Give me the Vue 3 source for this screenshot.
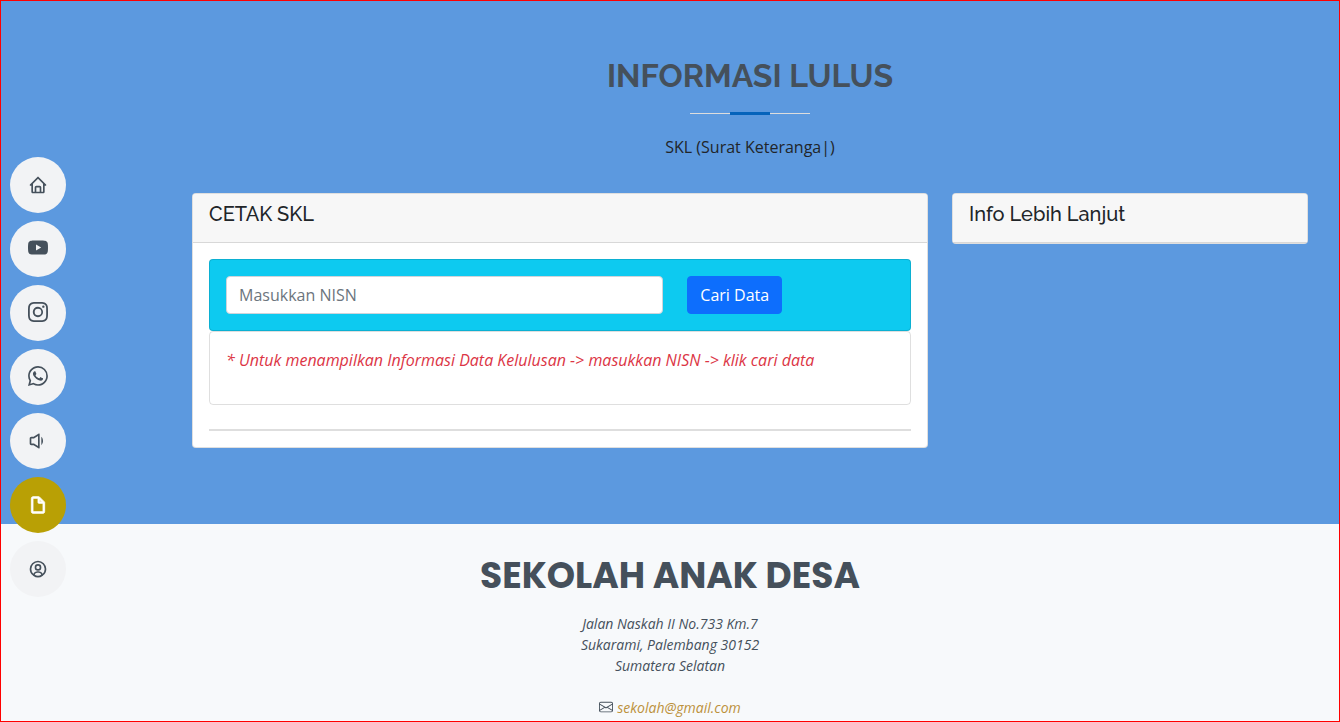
<script setup>
import { ref } from 'vue'

const nisn = ref('')

const links = [
  {
    label: 'Beranda',
    box: '0 0 24 24',
    path: 'M3 13h1v7c0 1.103.897 2 2 2h12c1.103 0 2-.897 2-2v-7h1a1 1 0 0 0 .707-1.707l-9-9a.999.999 0 0 0-1.414 0l-9 9A1 1 0 0 0 3 13zm7 7v-5h4v5h-4zm2-15.586 6 6V15l.001 5H16v-5c0-1.103-.897-2-2-2h-4c-1.103 0-2 .897-2 2v5H6v-9.586l6-6z',
  },
  {
    label: 'YouTube',
    box: '0 0 16 16',
    social: true,
    path: 'M8.051 1.999h.089c.822.003 4.987.033 6.11.335a2.01 2.01 0 0 1 1.415 1.42c.101.38.172.883.22 1.402l.01.104.022.26.008.104c.065.914.073 1.77.074 1.957v.075c-.001.194-.01 1.108-.082 2.06l-.008.105-.009.104c-.05.572-.124 1.14-.235 1.558a2.007 2.007 0 0 1-1.415 1.42c-1.16.312-5.569.334-6.18.335h-.142c-.309 0-1.587-.006-2.927-.052l-.17-.006-.087-.004-.171-.007-.171-.007c-1.11-.049-2.167-.128-2.654-.26a2.007 2.007 0 0 1-1.415-1.419c-.111-.417-.185-.986-.235-1.558L.09 9.82l-.008-.104A31.4 31.4 0 0 1 0 7.68v-.123c.002-.215.01-.958.064-1.778l.007-.103.003-.052.008-.104.022-.26.01-.104c.048-.519.119-1.023.22-1.402a2.007 2.007 0 0 1 1.415-1.42c.487-.13 1.544-.21 2.654-.26l.17-.007.172-.006.086-.003.171-.007A99.788 99.788 0 0 1 7.858 2h.193zM6.4 5.209v4.818l4.157-2.408L6.4 5.209z',
  },
  {
    label: 'Instagram',
    box: '0 0 16 16',
    social: true,
    path: 'M8 0C5.829 0 5.556.01 4.703.048 3.85.088 3.269.222 2.76.42a3.917 3.917 0 0 0-1.417.923A3.927 3.927 0 0 0 .42 2.76C.222 3.268.087 3.85.048 4.7.01 5.555 0 5.827 0 8.001c0 2.172.01 2.444.048 3.297.04.852.174 1.433.372 1.942.205.526.478.972.923 1.417.444.445.89.719 1.416.923.51.198 1.09.333 1.942.372C5.555 15.99 5.827 16 8 16s2.444-.01 3.298-.048c.851-.04 1.434-.174 1.943-.372a3.916 3.916 0 0 0 1.416-.923c.445-.445.718-.891.923-1.417.197-.509.332-1.09.372-1.942C15.99 10.445 16 10.173 16 8s-.01-2.445-.048-3.299c-.04-.851-.175-1.433-.372-1.941a3.926 3.926 0 0 0-.923-1.417A3.911 3.911 0 0 0 13.24.42c-.51-.198-1.092-.333-1.943-.372C10.443.01 10.172 0 7.998 0H8zm-.717 1.442h.718c2.136 0 2.389.007 3.232.046.78.035 1.204.166 1.486.275.373.145.64.319.92.599.28.28.453.546.598.92.11.281.24.705.275 1.485.039.843.047 1.096.047 3.231s-.008 2.389-.047 3.232c-.035.78-.166 1.203-.275 1.485a2.47 2.47 0 0 1-.599.919c-.28.28-.546.453-.92.598-.28.11-.704.24-1.485.276-.843.038-1.096.047-3.232.047s-2.39-.009-3.233-.047c-.78-.036-1.203-.166-1.485-.276a2.478 2.478 0 0 1-.92-.598 2.48 2.48 0 0 1-.6-.92c-.109-.281-.24-.705-.275-1.485-.038-.843-.046-1.096-.046-3.233 0-2.136.008-2.388.046-3.231.036-.78.166-1.204.276-1.486.145-.373.319-.64.599-.92.28-.28.546-.453.92-.598.282-.11.705-.24 1.485-.276.738-.034 1.024-.044 2.515-.045v.002zm4.988 1.328a.96.96 0 1 0 0 1.92.96.96 0 0 0 0-1.92zm-4.27 1.122a4.109 4.109 0 1 0 0 8.217 4.109 4.109 0 0 0 0-8.217zm0 1.441a2.667 2.667 0 1 1 0 5.334 2.667 2.667 0 0 1 0-5.334z',
  },
  {
    label: 'WhatsApp',
    box: '0 0 16 16',
    social: true,
    path: 'M13.601 2.326A7.854 7.854 0 0 0 7.994 0C3.627 0 .068 3.558.064 7.926c0 1.399.366 2.76 1.057 3.965L0 16l4.204-1.102a7.933 7.933 0 0 0 3.79.965h.004c4.368 0 7.926-3.558 7.93-7.93A7.898 7.898 0 0 0 13.6 2.326zM7.994 14.521a6.573 6.573 0 0 1-3.356-.92l-.24-.144-2.494.654.666-2.433-.156-.251a6.56 6.56 0 0 1-1.007-3.505c0-3.626 2.957-6.584 6.591-6.584a6.56 6.56 0 0 1 4.66 1.931 6.557 6.557 0 0 1 1.928 4.66c-.004 3.639-2.961 6.592-6.592 6.592zm3.615-4.934c-.197-.099-1.17-.578-1.353-.646-.182-.065-.315-.099-.445.099-.133.197-.513.646-.627.775-.114.133-.232.148-.43.05-.197-.1-.836-.308-1.592-.985-.59-.525-.985-1.175-1.103-1.372-.114-.198-.011-.304.088-.403.087-.088.197-.232.296-.346.1-.114.133-.198.198-.33.065-.134.034-.248-.015-.347-.05-.099-.445-1.076-.612-1.47-.16-.389-.323-.335-.445-.34-.114-.007-.247-.007-.38-.007a.729.729 0 0 0-.529.247c-.182.198-.691.677-.691 1.654 0 .977.71 1.916.81 2.049.098.133 1.394 2.132 3.383 2.992.47.205.84.326 1.129.418.475.152.904.129 1.246.08.38-.058 1.171-.48 1.338-.943.164-.464.164-.86.114-.943-.049-.084-.182-.133-.38-.232z',
  },
  {
    label: 'Pengumuman',
    box: '0 0 24 24',
    path: 'M4 17h2.697l5.748 3.832a1.004 1.004 0 0 0 1.027.05A1 1 0 0 0 14 20V4a1 1 0 0 0-1.554-.832L6.697 7H4c-1.103 0-2 .897-2 2v6c0 1.103.897 2 2 2zm0-8h3c.033 0 .061-.016.093-.019a1.027 1.027 0 0 0 .38-.116c.026-.015.057-.017.082-.033L12 5.868v12.264l-4.445-2.964c-.025-.017-.056-.02-.082-.033a.986.986 0 0 0-.382-.116C7.059 15.016 7.032 15 7 15H4V9zm12-2v10c1.225-1.1 2-3.229 2-5s-.775-3.9-2-5z',
  },
  {
    label: 'Informasi Lulus',
    box: '0 0 24 24',
    active: true,
    path: 'M19.937 8.68c-.011-.032-.02-.063-.033-.094a.997.997 0 0 0-.196-.293l-6-6a.997.997 0 0 0-.293-.196c-.03-.014-.062-.022-.094-.033a.991.991 0 0 0-.259-.051C13.04 2.011 13.021 2 13 2H6c-1.103 0-2 .897-2 2v16c0 1.103.897 2 2 2h12c1.103 0 2-.897 2-2V9c0-.021-.011-.04-.013-.062a.99.99 0 0 0-.05-.258zM16.586 8H14V5.414L16.586 8zM6 20V4h6v5a1 1 0 0 0 1 1h5l.002 10H6z',
  },
  {
    label: 'Masuk',
    box: '0 0 24 24',
    path: 'M12 2A10.13 10.13 0 0 0 2 12a10 10 0 0 0 4 7.92V20h.1a9.7 9.7 0 0 0 11.8 0h.1v-.08A10 10 0 0 0 22 12 10.13 10.13 0 0 0 12 2zM8.07 18.93A3 3 0 0 1 11 16.57h2a3 3 0 0 1 2.93 2.36 7.75 7.75 0 0 1-7.86 0zm9.54-1.29A5 5 0 0 0 13 14.57h-2a5 5 0 0 0-4.61 3.07A8 8 0 0 1 4 12a8.1 8.1 0 0 1 8-8 8.1 8.1 0 0 1 8 8 8 8 0 0 1-2.39 5.64zM12 6a3.91 3.91 0 0 0-4 4 3.91 3.91 0 0 0 4 4 3.91 3.91 0 0 0 4-4 3.91 3.91 0 0 0-4-4zm0 6a1.91 1.91 0 0 1-2-2 1.91 1.91 0 0 1 2-2 1.91 1.91 0 0 1 2 2 1.91 1.91 0 0 1-2 2z',
  },
]
</script>

<template>
  <div class="page">
    <nav class="side-nav">
      <a
        v-for="link in links"
        :key="link.label"
        href="#"
        class="nav-link"
        :class="{ active: link.active, social: link.social }"
        :aria-label="link.label"
      >
        <svg :viewBox="link.box" aria-hidden="true"><path fill-rule="evenodd" :d="link.path" /></svg>
      </a>
    </nav>

    <main class="main">
      <div class="container">
        <header class="section-title">
          <h2>INFORMASI LULUS</h2>
          <p>SKL (Surat Keteranga|)</p>
        </header>

        <div class="grid">
          <section class="card wide">
            <div class="card-header"><h5>CETAK SKL</h5></div>
            <div class="card-body">
              <form class="search" @submit.prevent>
                <input v-model="nisn" class="wide" type="text" placeholder="Masukkan NISN" aria-label="Masukkan NISN" />
                <div class="narrow"><button type="submit">Cari Data</button></div>
              </form>
              <div class="note">
                <p>* Untuk menampilkan Informasi Data Kelulusan -&gt; masukkan NISN -&gt; klik cari data</p>
              </div>
              <hr />
            </div>
          </section>

          <aside class="card narrow">
            <div class="card-header"><h5>Info Lebih Lanjut</h5></div>
          </aside>
        </div>
      </div>
    </main>

    <footer class="footer">
      <h3>SEKOLAH ANAK DESA</h3>
      <address>
        Jalan Naskah II No.733 Km.7<br />
        Sukarami, Palembang 30152<br />
        Sumatera Selatan<br /><br />
        <svg class="mail" viewBox="0 0 16 16" aria-hidden="true">
          <path d="M0 4a2 2 0 0 1 2-2h12a2 2 0 0 1 2 2v8a2 2 0 0 1-2 2H2a2 2 0 0 1-2-2V4zm2-1a1 1 0 0 0-1 1v.217l7 4.2 7-4.2V4a1 1 0 0 0-1-1H2zm13 2.383-4.758 2.855L15 11.114v-5.73zm-.034 6.878L9.271 8.82 8 9.583 6.728 8.82l-5.694 3.44A1 1 0 0 0 2 13h12a1 1 0 0 0 .966-.739zM1 11.114l4.758-2.876L1 5.383v5.73z" />
        </svg>
        <a href="mailto:sekolah@gmail.com">sekolah@gmail.com</a>
      </address>
    </footer>
    <div class="frame"></div>
  </div>
</template>

<style>
html,
body {
  height: 100%;
  overflow: hidden;
  background: #f7f9fb;
}
</style>

<style scoped>
.page,
.page * {
  box-sizing: border-box;
}
.page {
  font-family: "Open Sans", "Noto Sans", sans-serif;
  font-size: 16px;
  line-height: 24px;
  color: #212529;
}
h2,
h3,
h5,
p {
  margin: 0;
}
.frame {
  position: fixed;
  inset: 0;
  border: 1px solid #f00;
  pointer-events: none;
  z-index: 10;
}
.side-nav {
  position: fixed;
  inset: 0 auto 0 0;
  z-index: 5;
  display: flex;
  flex-direction: column;
  justify-content: center;
  gap: 8px;
  padding: 32px 10px 0;
}
.nav-link {
  display: flex;
  align-items: center;
  justify-content: center;
  width: 56px;
  height: 56px;
  border-radius: 50%;
  background: #f2f3f5;
  color: #45505b;
}
.nav-link svg {
  width: 20px;
  height: 20px;
  fill: currentColor;
}
.nav-link.social {
  padding-bottom: 2px;
}
.nav-link.active {
  background: #b9a005;
  color: #fff;
}
.nav-link.active path {
  stroke: currentColor;
  stroke-width: 1;
}
.main {
  padding: 57px 0 76px 160px;
  background: #5c99df;
}
.container {
  max-width: 1140px;
  margin: 0 auto;
  padding: 0 12px;
}
.section-title {
  padding-bottom: 34px;
  text-align: center;
}
.section-title h2 {
  position: relative;
  margin-bottom: 20px;
  padding-bottom: 20px;
  font-family: Raleway, Lato, sans-serif;
  font-size: 32px;
  font-weight: 700;
  line-height: 38px;
  color: #45505b;
}
.section-title h2::before,
.section-title h2::after {
  content: "";
  position: absolute;
  left: 50%;
  transform: translateX(-50%);
}
.section-title h2::before {
  bottom: 1px;
  width: 120px;
  height: 1px;
  background: #ddd;
}
.section-title h2::after {
  bottom: 0;
  width: 40px;
  height: 3px;
  background: #0563bb;
}
.grid,
.search {
  display: grid;
  grid-template-columns: repeat(12, 1fr);
  column-gap: 24px;
  align-items: start;
}
.wide {
  grid-column: span 8;
}
.narrow {
  grid-column: span 4;
}
.card {
  border: 1px solid rgba(0, 0, 0, 0.125);
  border-radius: 4px;
  background: #fff;
  background-clip: border-box;
}
.card-header {
  padding: 8px 16px 16px;
  border-bottom: 1px solid rgba(0, 0, 0, 0.125);
  border-radius: 3px 3px 0 0;
  background: #f7f7f7;
}
.card-header h5 {
  font-family: Raleway, Lato, sans-serif;
  font-size: 20px;
  font-weight: 500;
  line-height: 24px;
}
.card-body {
  padding: 16px;
}
.search {
  padding: 16px;
  border: 1px solid rgba(0, 0, 0, 0.125);
  border-radius: 4px;
  background: #0dcaf0;
}
input,
button {
  height: 38px;
  padding: 6px 12px;
  border: 1px solid #ced4da;
  border-radius: 4px;
  font: inherit;
}
input {
  width: 100%;
  background: #fff;
  color: #212529;
}
input::placeholder {
  color: #6c757d;
  opacity: 1;
}
button {
  border-color: #0d6efd;
  background: #0d6efd;
  color: #fff;
}
.note {
  padding: 16px 16px 32px;
  border: 1px solid rgba(0, 0, 0, 0.125);
  border-radius: 4px;
}
.note p {
  font-style: italic;
  color: #dc3545;
}
hr {
  height: 2px;
  margin: 24px 0 0;
  border: 0;
  background: #dedede;
}
.footer {
  padding: 30px 16px;
  background: #f7f9fb;
  text-align: center;
  color: #45505b;
}
.footer h3 {
  margin-bottom: 16px;
  font-family: Poppins, Inter, sans-serif;
  font-size: 36px;
  font-weight: 700;
  line-height: 43px;
}
address {
  font-size: 14px;
  font-style: italic;
  line-height: 21px;
}
address a {
  color: #bc913c;
  text-decoration: none;
}
.mail {
  width: 14px;
  height: 14px;
  margin-right: 4px;
  vertical-align: -1px;
  fill: currentColor;
}
</style>
